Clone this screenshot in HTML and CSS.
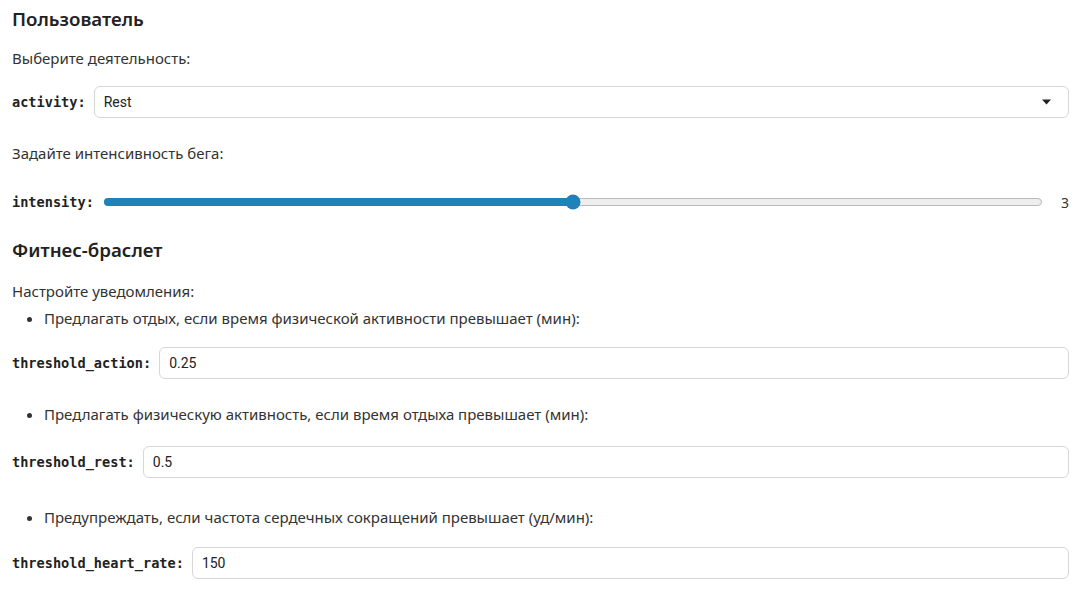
FILE: index.html
```html
<!DOCTYPE html>
<html>
<head>
<meta charset="utf-8">
<link rel="stylesheet" href="styles.css">
</head>
<body>
<div class="page">
  <h2 class="title first">Пользователь</h2>
  <p class="text t1">Выберите деятельность:</p>
  <div class="row r-select">
    <span class="label">activity:</span>
    <div class="box select">
      <span class="value">Rest</span>
      <svg class="caret" width="9" height="6" viewBox="0 0 9 6"><path d="M0 0.5 H9 L4.5 5.5 Z" fill="#222"/></svg>
    </div>
  </div>
  <p class="text t2">Задайте интенсивность бега:</p>
  <div class="row r-slider">
    <span class="label">intensity:</span>
    <div class="slider">
      <div class="track">
        <div class="fill" style="width:50%"></div>
        <div class="thumb" style="left:50%"></div>
      </div>
    </div>
    <span class="readout">3</span>
  </div>
  <h2 class="title second">Фитнес-браслет</h2>
  <p class="text t3">Настройте уведомления:</p>
  <ul class="list l1"><li>Предлагать отдых, если время физической активности превышает (мин):</li></ul>
  <div class="row r-in in1">
    <span class="label">threshold_action:</span>
    <div class="box"><span class="value">0.25</span></div>
  </div>
  <ul class="list l2"><li>Предлагать физическую активность, если время отдыха превышает (мин):</li></ul>
  <div class="row r-in in2">
    <span class="label">threshold_rest:</span>
    <div class="box"><span class="value">0.5</span></div>
  </div>
  <ul class="list l3"><li>Предупреждать, если частота сердечных сокращений превышает (уд/мин):</li></ul>
  <div class="row r-in in3">
    <span class="label">threshold_heart_rate:</span>
    <div class="box"><span class="value">150</span></div>
  </div>
</div>
</body>
</html>
```
FILE: styles.css
```css
html, body {
  margin: 0;
  padding: 0;
  background: #fff;
}
.page {
  padding: 0 10px 0 12px;
  font-family: "Noto Sans", "Open Sans", sans-serif;
  color: #333;
}
.title {
  margin: 0;
  font-size: 18.7px;
  line-height: 24px;
  font-weight: 600;
  color: #222;
}
.title.first { padding-top: 7px; }
.title.second { margin-top: 22px; }
.text {
  margin: 0;
  font-size: 15px;
  line-height: 20px;
}
.t1 { margin-top: 17px; }
.t2 { margin-top: 25px; }
.t3 { margin-top: 19px; }
.row {
  display: flex;
  align-items: center;
  gap: 8px;
}
.r-select { margin-top: 18px; }
.r-slider { margin-top: 25px; height: 28px; }
.in1 { margin-top: 19px; }
.in2 { margin-top: 22px; }
.in3 { margin-top: 20px; }
.label {
  font-family: "DejaVu Sans Mono", monospace;
  font-weight: bold;
  font-size: 13.6px;
  color: #222;
  white-space: nowrap;
}
.box {
  flex: 1;
  height: 32px;
  box-sizing: border-box;
  border: 1px solid #d6d6d6;
  border-radius: 6px;
  display: flex;
  align-items: center;
  padding: 0 9px;
}
.value {
  font-family: Roboto, "Liberation Sans", sans-serif;
  font-size: 14px;
  color: #222;
  flex: 1;
}
.select .caret { margin-right: 8px; }
.slider {
  flex: 1;
  padding: 0 11px 0 2px;
}
.track {
  position: relative;
  height: 8px;
  box-sizing: border-box;
  background: #eeeeee;
  border: 1px solid #bbbbbb;
  border-radius: 4px;
}
.fill {
  position: absolute;
  left: -1px;
  top: -1px;
  height: 8px;
  background: #1f82b8;
  border-radius: 4px;
}
.thumb {
  position: absolute;
  top: 50%;
  width: 15px;
  height: 15px;
  border-radius: 50%;
  background: #1f82b8;
  transform: translate(-50%, -50%);
}
.readout {
  font-family: "Noto Sans", sans-serif;
  font-size: 14px;
  color: #333;
  width: 8px;
  text-align: right;
}
.list {
  margin: 0;
  padding-left: 32px;
  font-size: 15px;
  line-height: 20px;
}
.l1 { margin-top: 7px; }
.l2 { margin-top: 25px; }
.l3 { margin-top: 29px; }
```
